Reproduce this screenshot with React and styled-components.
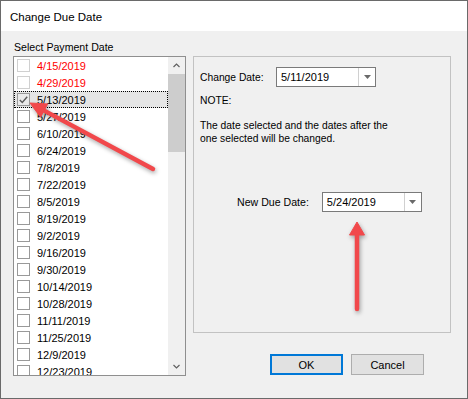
import React from 'react';
import styled, { createGlobalStyle } from 'styled-components';

const GlobalStyle = createGlobalStyle`
  html, body {
    margin: 0;
    padding: 0;
    background: #fff;
  }
  body {
    font-family: "Liberation Sans", Arial, sans-serif;
    color: #000;
  }
`;

const dates = [
  { d: '4/15/2019', locked: true },
  { d: '4/29/2019', locked: true },
  { d: '5/13/2019', checked: true, selected: true },
  { d: '5/27/2019' },
  { d: '6/10/2019' },
  { d: '6/24/2019' },
  { d: '7/8/2019' },
  { d: '7/22/2019' },
  { d: '8/5/2019' },
  { d: '8/19/2019' },
  { d: '9/2/2019' },
  { d: '9/16/2019' },
  { d: '9/30/2019' },
  { d: '10/14/2019' },
  { d: '10/28/2019' },
  { d: '11/11/2019' },
  { d: '11/25/2019' },
  { d: '12/9/2019' },
  { d: '12/23/2019' },
];

const Window = styled.div`
  position: relative;
  width: 468px;
  height: 399px;
  box-sizing: border-box;
  border: 1px solid #6a6a6a;
  background: #f0f0f0;
  overflow: hidden;
`;

const TitleBar = styled.div`
  height: 30px;
  background: #fff;
  display: flex;
  align-items: center;
  padding-left: 9px;
  font-size: 11.5px;
  padding-top: 1px;
  box-sizing: border-box;
`;

const Body = styled.div`
  display: grid;
  grid-template-columns: 173px 258px;
  grid-template-rows: 16px 277px 43px;
  column-gap: 7px;
  padding: 9px 0 0 12px;
`;

const Caption = styled.div`
  grid-column: 1;
  grid-row: 1;
  font-size: 10.6px;
  line-height: 14px;
  padding-left: 1px;
`;

const ListBox = styled.div`
  grid-column: 1;
  grid-row: 2 / span 2;
  height: 320px;
  box-sizing: border-box;
  border: 1px solid #8f8f8f;
  background: #fff;
  display: flex;
  overflow: hidden;
`;

const Items = styled.div`
  flex: 1;
  overflow: hidden;
`;

const Row = styled.div`
  height: 17px;
  display: flex;
  align-items: center;
  gap: 7px;
  padding-left: 3px;
  font-size: 11px;
  color: ${p => (p.$red ? '#ff0000' : '#000')};
  background: ${p => (p.$selected ? '#e5e5e5' : 'transparent')};
  outline: ${p => (p.$selected ? '1px dotted #000' : 'none')};
  outline-offset: -1px;
`;

const Check = styled.span`
  width: 13px;
  height: 13px;
  box-sizing: border-box;
  border: 1px solid ${p => (p.$locked ? '#d0d0d0' : '#999')};
  background: ${p => (p.$checked ? '#eaeaea' : '#fff')};
  display: flex;
  align-items: center;
  justify-content: center;
  flex-shrink: 0;
`;

const ScrollBar = styled.div`
  width: 17px;
  background: #f0f0f0;
  display: flex;
  flex-direction: column;
`;

const ScrollBtn = styled.div`
  height: 17px;
  display: flex;
  align-items: center;
  justify-content: center;
  flex-shrink: 0;
`;

const Thumb = styled.div`
  height: 78px;
  background: #cdcdcd;
  flex-shrink: 0;
`;

const Track = styled.div`
  flex: 1;
`;

const GroupBox = styled.div`
  grid-column: 2;
  grid-row: 2;
  border: 1px solid #c2c2c2;
  box-sizing: border-box;
  padding: 10px 6px 0 6px;
  display: flex;
  flex-direction: column;
  font-size: 10.3px;
`;

const Field = styled.div`
  display: flex;
  align-items: center;
  gap: ${p => p.$gap || 0}px;
  padding-left: ${p => p.$indent || 0}px;
  margin-top: ${p => p.$top || 0}px;
`;

const FieldLabel = styled.span`
  width: ${p => (p.$w ? `${p.$w}px` : 'auto')};
  font-size: ${p => p.$size || 10.3}px;
`;

const Combo = styled.div`
  width: 100px;
  height: 20px;
  box-sizing: border-box;
  border: 1px solid #7a7a7a;
  background: #fff;
  display: flex;
`;

const ComboValue = styled.div`
  flex: 1;
  display: flex;
  align-items: center;
  padding-left: 4px;
  font-size: 11px;
`;

const ComboDrop = styled.div`
  width: 16px;
  border-left: 1px solid #d0d0d0;
  display: flex;
  align-items: center;
  justify-content: center;
`;

const Note = styled.div`
  margin-top: 7px;
  line-height: 13px;
`;

const Para = styled.p`
  margin: 12px 0 0;
  line-height: 13px;
  width: 206px;
`;

const Buttons = styled.div`
  grid-column: 2;
  grid-row: 3;
  display: flex;
  justify-content: flex-end;
  align-items: flex-start;
  gap: 8px;
  padding: 21px 27px 0 0;
`;

const Button = styled.button`
  width: 73px;
  height: 21px;
  box-sizing: border-box;
  background: #e1e1e1;
  border: ${p => (p.$primary ? '2px solid #0078d7' : '1px solid #adadad')};
  font-family: "Liberation Sans", Arial, sans-serif;
  font-size: 11px;
  color: #000;
  padding: 0;
`;

const Overlay = styled.svg`
  position: absolute;
  left: 0;
  top: 0;
  pointer-events: none;
  filter: drop-shadow(1px 2px 2px rgba(0, 0, 0, 0.35));
`;

function Chevron({ down }) {
  return (
    <svg width="7" height="5" viewBox="0 0 7 5">
      <polyline
        points={down ? '0.5,1 3.5,4 6.5,1' : '0.5,4 3.5,1 6.5,4'}
        fill="none"
        stroke="#606060"
        strokeWidth="1.2"
      />
    </svg>
  );
}

function DropArrow() {
  return (
    <svg width="7" height="4" viewBox="0 0 7 4">
      <polygon points="0,0 7,0 3.5,4" fill="#6a6a6a" />
    </svg>
  );
}

function ComboBox({ value }) {
  return (
    <Combo>
      <ComboValue>{value}</ComboValue>
      <ComboDrop>
        <DropArrow />
      </ComboDrop>
    </Combo>
  );
}

function Arrow({ from, to, head = 16, half = 7.5, width = 4.5 }) {
  const dx = to[0] - from[0];
  const dy = to[1] - from[1];
  const len = Math.hypot(dx, dy);
  const ux = dx / len;
  const uy = dy / len;
  const bx = to[0] - ux * head;
  const by = to[1] - uy * head;
  const nx = -uy;
  const ny = ux;
  const pts = [
    `${to[0]},${to[1]}`,
    `${bx + nx * half},${by + ny * half}`,
    `${bx - nx * half},${by - ny * half}`,
  ].join(' ');
  return (
    <g fill="#f1484b" stroke="#f1484b">
      <line x1={from[0]} y1={from[1]} x2={bx + ux * 2} y2={by + uy * 2} strokeWidth={width} strokeLinecap="round" />
      <polygon points={pts} strokeWidth="1" strokeLinejoin="round" />
    </g>
  );
}

export default function App() {
  return (
    <>
      <GlobalStyle />
      <Window>
        <TitleBar>Change Due Date</TitleBar>
        <Body>
          <Caption>Select Payment Date</Caption>
          <ListBox>
            <Items>
              {dates.map(item => (
                <Row key={item.d} $red={item.locked} $selected={item.selected}>
                  <Check $locked={item.locked} $checked={item.checked}>
                    {item.checked && (
                      <svg width="9" height="8" viewBox="0 0 9 8">
                        <polyline points="0.8,4 3.3,6.5 8.2,0.8" fill="none" stroke="#5a5a5a" strokeWidth="1.4" />
                      </svg>
                    )}
                  </Check>
                  {item.d}
                </Row>
              ))}
            </Items>
            <ScrollBar>
              <ScrollBtn>
                <Chevron />
              </ScrollBtn>
              <Thumb />
              <Track />
              <ScrollBtn>
                <Chevron down />
              </ScrollBtn>
            </ScrollBar>
          </ListBox>

          <GroupBox>
            <Field>
              <FieldLabel $w={76}>Change Date:</FieldLabel>
              <ComboBox value="5/11/2019" />
            </Field>
            <Note>NOTE:</Note>
            <Para>
              The date selected and the dates after the one selected will be changed.
            </Para>
            <Field $indent={37} $gap={13} $top={47}>
              <FieldLabel $size={10.6}>New Due Date:</FieldLabel>
              <ComboBox value="5/24/2019" />
            </Field>
          </GroupBox>

          <Buttons>
            <Button $primary>OK</Button>
            <Button>Cancel</Button>
          </Buttons>
        </Body>

        <Overlay width="468" height="399" viewBox="0 0 468 399">
          <Arrow from={[152, 168]} to={[29, 102]} />
          <Arrow from={[356, 308]} to={[356, 221]} head={13} half={7.5} />
        </Overlay>
      </Window>
    </>
  );
}
